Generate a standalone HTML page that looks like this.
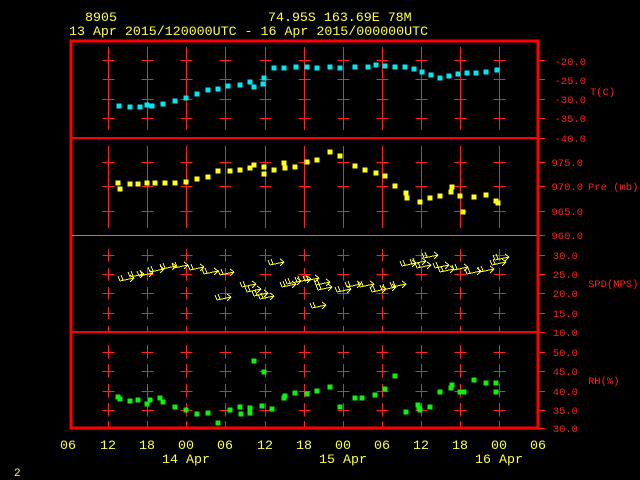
<!DOCTYPE html><html><head><meta charset="utf-8"><style>
body{margin:0;background:#000;width:640px;height:480px;overflow:hidden}
svg{display:block}
text{font-family:"Liberation Mono",monospace}
.y{fill:#ffff40;font-size:13.3px}
.r{fill:#ff2020;font-size:10.5px}
</style></head><body>
<svg id="s" width="640" height="480" xmlns="http://www.w3.org/2000/svg">
<text class="y" x="85" y="21">8905</text>
<text class="y" x="268" y="21">74.95S  163.69E   78M</text>
<text class="y" x="69" y="35">13 Apr 2015/120000UTC - 16 Apr 2015/000000UTC</text>
<g id="g" shape-rendering="crispEdges"></g>
<rect x="71" y="41" width="467" height="387" fill="none" stroke="#ff0000" stroke-width="3" shape-rendering="crispEdges"/>
<g class="r" text-anchor="end">
<text x="586" y="65">-20.0</text><text x="586" y="84">-25.0</text><text x="586" y="103">-30.0</text><text x="586" y="122">-35.0</text><text x="586" y="142">-40.0</text>
<text x="583" y="166">975.0</text><text x="583" y="190">970.0</text><text x="583" y="215">965.0</text><text x="583" y="239">960.0</text>
<text x="578" y="259">30.0</text><text x="578" y="278">25.0</text><text x="578" y="297">20.0</text><text x="578" y="317">15.0</text><text x="578" y="336">10.0</text>
<text x="578" y="356">50.0</text><text x="578" y="375">45.0</text><text x="578" y="395">40.0</text><text x="578" y="414">35.0</text><text x="578" y="432">30.0</text>
</g>
<g class="r"><text x="590" y="95">T(C)</text><text x="588" y="190">Pre (mb)</text><text x="588" y="287">SPD(MPS)</text><text x="588" y="384">RH(%)</text></g>
<g class="y" text-anchor="middle">
<text x="68" y="449">06</text><text x="108" y="449">12</text><text x="147" y="449">18</text><text x="186" y="449">00</text><text x="225" y="449">06</text><text x="265" y="449">12</text><text x="304" y="449">18</text><text x="343" y="449">00</text><text x="382" y="449">06</text><text x="421" y="449">12</text><text x="460" y="449">18</text><text x="499" y="449">00</text><text x="538" y="449">06</text>
<text x="186" y="463">14 Apr</text><text x="343" y="463">15 Apr</text><text x="499" y="463">16 Apr</text>
</g>
<text x="14" y="476" style="fill:#ffff40;font-size:11px">2</text>
</svg>
<script>
var g=document.getElementById('g'),h='';
function L(a,b,c,d,col,w){h+='<line x1="'+a+'" y1="'+b+'" x2="'+c+'" y2="'+d+'" stroke="'+col+'" stroke-width="'+(w||1)+'"/>';}
L(72,138,538,138,'#f00',2);L(72,235.5,538,235.5,'#888',1);L(72,332,538,332,'#f00',2);
var xs=[108,147,186,225,265,304,343,382,421,460,499];
var ty=[[60,79,99,118],[162,186,211],[255,274,293,313],[352,371,391,410]];
var R='#ff2020';
xs.forEach(function(x0){
 var x=x0+0.5;
 ty.forEach(function(a,i){a.forEach(function(y0){var y=y0+0.5;L(x-6,y,x+6,y,R);L(x,y-6,x,y+6,R);});});
 L(x,47,x,130,R);L(x,146,x,228,R);
 [249,268,287,307,326,345,364,384,403,421].forEach(function(y){L(x,y,x,y+6,R)});
});
[60,79,99,118,138,162,186,211,235,255,274,293,313,332,352,371,391,410,428].forEach(function(y){L(538,y+0.5,545,y+0.5,R)});
function P(arr,c,s){for(var i=0;i<arr.length;i+=2)h+='<rect x="'+(arr[i]-2.5)+'" y="'+(arr[i+1]-2.5)+'" width="5" height="5" fill="'+c+'"/>';}
P([119,106,130,107,140,107,147,105,152,106,163,104,175,101,186,98,197,94,208,90,218,89,228,86,240,85,250,82,254,87,263,84,264,78,274,68,284,68,296,67,307,67,317,68,330,67,340,68,355,67,368,67,376,65,385,66,395,67,405,67,414,69,422,72,431,75,440,78,449,76,458,74,467,73,476,73,486,72,497,70],'#00e8f0');
P([118,183,120,189,130,184,138,184,147,183,155,183,165,183,175,183,186,182,197,179,208,177,218,171,230,171,240,170,250,168,254,165,264,167,264,174,274,170,284,163,285,168,295,167,307,162,317,160,330,152,340,156,355,166,365,170,376,173,385,176,395,186,406,193,407,198,420,202,430,198,440,196,451,192,452,187,460,196,463,212,474,197,486,195,496,201,498,203],'#ffff20');
P([118,397,120,399,130,401,138,400,147,404,150,400,160,398,163,402,175,407,186,410,197,414,208,413,218,423,230,410,240,407,250,413,241,414,250,408,254,361,264,372,262,406,272,409,284,398,285,396,295,393,307,394,317,391,330,387,340,407,355,398,362,398,375,395,385,389,395,376,406,412,418,405,419,408,420,410,430,407,440,392,451,388,452,385,460,392,464,392,474,380,486,383,496,383,496,392],'#10f010');
var W=[128,279,138,275,147,274,158,270,170,267,182,266,198,268,212,272,228,273,225,298,250,285,255,290,262,294,268,297,278,263,290,285,295,282,305,280,313,279,324,283,326,288,320,306,345,290,355,285,368,285,380,290,390,288,400,285,410,264,420,262,425,266,432,256,443,266,448,270,462,268,475,272,488,270,500,263,503,258];
var Y='#ffff30';
for(var i=0;i<W.length;i+=2){var x=W[i],y=W[i+1];L(x-8,y+2,x+6,y-1,Y);L(x+6,y-1,x+2,y-4,Y);L(x+6,y-1,x+2,y+3,Y);L(x-8,y+2,x-10,y-3,Y);L(x-5,y+1,x-7,y-4,Y);}
g.innerHTML=h;
</script>
</body></html>
